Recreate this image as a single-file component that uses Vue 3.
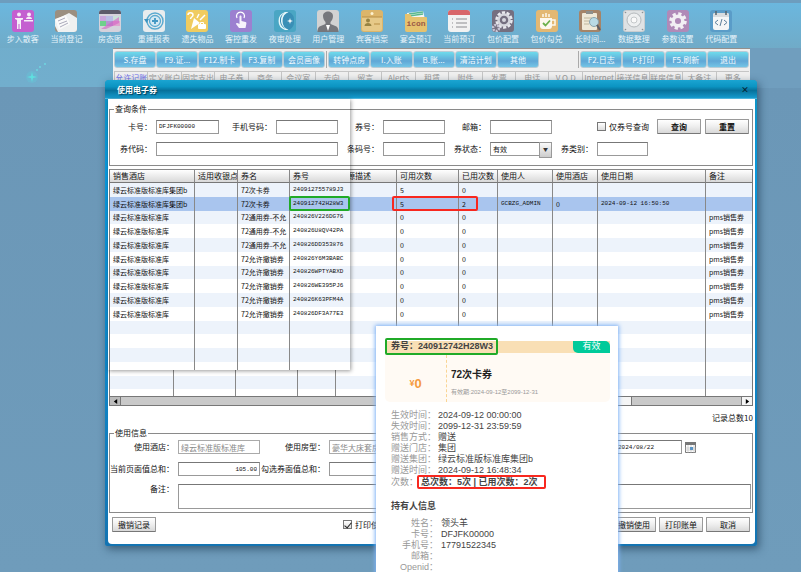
<template>
  <div class="page">
    <!-- 顶部工具栏 -->
    <nav class="toolbar">
      <a v-for="item in tools" :key="item.name" class="tool" href="#">
        <svg viewBox="0 0 22 22" aria-hidden="true" v-html="item.icon"></svg>
        <span>{{ item.name }}</span>
      </a>
    </nav>
    <svg class="sparkle" viewBox="0 0 40 24" aria-hidden="true">
      <circle cx="12" cy="15" r="6" fill="#64c9d9" opacity=".35" />
      <path d="M12 10l1 4 4 1-4 1-1 4-1-4-4-1 4-1z" fill="#5fe0e0" />
      <g fill="#6fd6e0">
        <circle cx="20" cy="5" r="1" /><circle cx="25" cy="2" r="1" /><circle cx="17" cy="8" r="1" />
      </g>
    </svg>

    <!-- 主界面 -->
    <main class="panel">
      <div class="actions">
        <div class="group five"><button v-for="a in actionsA" :key="a">{{ a }}</button></div>
        <i class="sep"></i>
        <div class="group five"><button v-for="a in actionsB" :key="a">{{ a }}</button></div>
        <i class="space"></i>
        <i class="sep"></i>
        <div class="group four"><button v-for="a in actionsC" :key="a">{{ a }}</button></div>
      </div>
      <div class="tabs">
        <a v-for="(t, i) in tabs" :key="t" href="#" :class="{ active: i === 0 }">{{ t }}</a>
      </div>
    </main>

    <!-- 使用电子券 弹窗 -->
    <section class="dialog">
      <header class="dialog-title">
        <h1>使用电子券</h1>
        <button class="close" aria-label="关闭">×</button>
      </header>
      <div class="dialog-body">
        <fieldset class="search">
          <legend>查询条件</legend>
          <div class="search-grid">
            <label for="cardNo">卡号：</label>
            <input id="cardNo" v-model="query.cardNo" class="mono" type="text">
            <label for="mobile">手机号码：</label>
            <input id="mobile" v-model="query.mobile" type="text">
            <label for="couponNo">券号：</label>
            <input id="couponNo" v-model="query.couponNo" type="text">
            <label for="email">邮箱：</label>
            <input id="email" v-model="query.email" type="text">
            <span></span>
            <label class="check" for="onlyNo"><input id="onlyNo" type="checkbox">仅券号查询</label>
            <div class="search-buttons">
              <button class="btn strong">查询</button>
              <button class="btn strong">重置</button>
            </div>

            <label for="code">券代码：</label>
            <input id="code" v-model="query.code" class="wide" type="text">
            <label for="barcode">条码号：</label>
            <input id="barcode" v-model="query.barcode" type="text">
            <label for="status">券状态：</label>
            <div class="select">
              <select id="status"><option>有效</option></select>
            </div>
            <label for="category">券类别：</label>
            <input id="category" v-model="query.category" type="text">
          </div>
        </fieldset>

        <div class="results">
          <table>
            <colgroup>
              <col v-for="(c, i) in baseCols" :key="i" :style="{ width: c.width }">
            </colgroup>
            <thead>
              <tr><th v-for="(c, i) in baseCols" :key="i">{{ c.title }}</th></tr>
            </thead>
            <tbody>
              <tr v-for="(r, i) in rows" :key="i" :class="{ selected: i === 1 }">
                <td v-for="(c, j) in baseCols" :key="j" :class="{ mono: c.mono }">{{ c.key ? r[c.key] : '' }}</td>
              </tr>
            </tbody>
          </table>
          <span class="mark-red count-mark"></span>
        </div>
        <div class="scrollbar">
          <button aria-label="向左滚动"><svg viewBox="0 0 6 6"><path d="M5 0v6L1 3z" /></svg></button>
          <div class="track"><i class="thumb"></i></div>
          <button class="light" aria-label="向右滚动"><svg viewBox="0 0 6 6"><path d="M1 0v6l4-3z" /></svg></button>
        </div>
        <p class="total">记录总数10</p>

        <fieldset class="usage">
          <legend>使用信息</legend>
          <div class="usage-grid">
            <label for="hotel">使用酒店：</label>
            <input id="hotel" class="readonly" type="text" value="绿云标准版标准库" readonly>
            <label for="room">使用房型：</label>
            <input id="room" class="readonly" type="text" value="豪华大床套房" readonly>
            <label for="date">使用日期：</label>
            <input id="date" class="mono" type="text" value="2024/08/22">
            <button class="calendar" aria-label="选择日期">
              <svg viewBox="0 0 11 11">
                <path d="M.5 1.5h10v9H.5z" fill="#fff" stroke="#777" />
                <path d="M0 0h11v3H0z" fill="#777" />
                <path d="M3 3v8M6 3v8M9 3v8M0 6h11M0 8h11" stroke="#bbb" stroke-width=".6" />
                <path d="M5 5h3v3H5z" fill="#5b94c4" />
              </svg>
            </button>

            <label for="pageSum">当前页面值总和：</label>
            <input id="pageSum" class="number mono" type="text" value="105.00">
            <label for="pickSum">勾选券面值总和：</label>
            <input id="pickSum" class="number" type="text">

            <label class="remark-label" for="remark">备注：</label>
            <textarea id="remark"></textarea>
          </div>
        </fieldset>

        <footer class="footer">
          <button class="btn">撤销记录</button>
          <label class="check" for="print"><input id="print" type="checkbox" checked>打印使用单</label>
          <i class="space"></i>
          <button class="btn">撤销使用</button>
          <button class="btn">打印账单</button>
          <button class="btn">取消</button>
        </footer>

        <!-- 横向滚动前的左侧列 -->
        <div class="inset">
          <div class="inset-clip">
            <table>
              <colgroup>
                <col v-for="c in insetCols" :key="c.key" :style="{ width: c.width }">
              </colgroup>
              <thead>
                <tr><th v-for="c in insetCols" :key="c.key">{{ c.title }}</th></tr>
              </thead>
              <tbody>
                <tr v-for="(r, i) in rows" :key="i" :class="{ selected: i === 1 }">
                  <td v-for="c in insetCols" :key="c.key" :class="{ mono: c.mono }">{{ r[c.key] }}</td>
                </tr>
              </tbody>
            </table>
          </div>
          <span class="mark-green no-mark"></span>
        </div>
      </div>
    </section>

    <!-- 券详情 -->
    <aside class="coupon">
      <div class="coupon-head">
        <strong class="mark-green">券号：240912742H28W3</strong>
        <span class="badge">有效</span>
      </div>
      <div class="coupon-body">
        <div class="price"><small>¥</small>0</div>
        <div class="desc">
          <h2>72次卡券</h2>
          <p>有效期:2024-09-12至2099-12-31</p>
        </div>
      </div>
      <dl class="info">
        <template v-for="d in details" :key="d[0]">
          <dt>{{ d[0] }}：</dt>
          <dd>{{ d[1] }}</dd>
        </template>
      </dl>
      <p class="times">次数：<strong class="mark-red">总次数：5次 | 已用次数：2次</strong></p>
      <h3>持有人信息</h3>
      <dl class="info holder">
        <template v-for="d in holder" :key="d[0]">
          <dt>{{ d[0] }}：</dt>
          <dd>{{ d[1] }}</dd>
        </template>
      </dl>
    </aside>
  </div>
</template>

<script setup>
import { reactive } from 'vue'

const box = (fill) => `<rect width="22" height="22" rx="3" fill="${fill}"/>`

const tools = [
  {
    name: '步入散客',
    icon: box('#c45fd0') + '<g fill="#f5eef8"><circle cx="7" cy="4.500" r="2"/><path d="M3 8h8v1.500L9 10v9H7.500v-5h-1v5H5v-9l-2-1z"/><circle cx="17" cy="4.500" r="2"/><path d="M14 9c0-3 6-3 6 0z"/><path d="M12 10h9v1.500h-9z"/></g>'
  },
  {
    name: '当前登记',
    icon: box('#9b8f80') + '<path d="M0 10L14 3l8 5v11a3 3 0 0 1-3 3H3l-3-6z" fill="#eef0f0"/><path d="M0 9l11-4 4 9-11 6z" fill="#fafafa"/><path d="M3 11l7-3M4 14l8-3M5 17l8-4" stroke="#aab" stroke-width="1" fill="none"/>'
  },
  {
    name: '房态图',
    icon: box('#d5d2dc') + '<path d="M1 6h6v5H1z" fill="#c9a6dd"/><path d="M7 6h7v5H7z" fill="#b9bde6"/><path d="M14 6h7v5h-7z" fill="#c9e0d8"/><path d="M1 11h6v5H1z" fill="#6fd08c"/><path d="M7 11h7v5H7z" fill="#b593d2"/><path d="M14 11h7v5h-7z" fill="#dfa3cf"/><path d="M2 19L20 7v6L7 19z" fill="#d35fc4" opacity=".6"/><path d="M0 4V3a3 3 0 0 1 3-3h16a3 3 0 0 1 3 3v1z" fill="#5c5b6b"/>'
  },
  {
    name: '重建报表',
    icon: box('#e8ecee') + '<circle cx="12" cy="11" r="8" fill="none" stroke="#5aaad0" stroke-width="1.500"/><circle cx="12" cy="11" r="5.500" fill="#d4e9f3" stroke="#5aaad0" stroke-width="1.300"/><path d="M12 8v6M9 11h6" stroke="#4198c4" stroke-width="1.800"/><path d="M1 9l5 0-2.500 4z" fill="#3d93bf"/>'
  },
  {
    name: '遗失物品',
    icon: box('#f0cc60') + '<path d="M5 19L8 8l6 5z" fill="#fff"/><path d="M2 5c0-3 5-3 5 0 0 2-2.500 2-2.500 4M13 4l-2 4M19 5l-5 5" stroke="#fff" stroke-width="1.500" fill="none"/><rect x="12" y="14" width="8" height="5" rx="1" fill="#fff"/><path d="M14.500 14v-1.500h3V14" stroke="#fff" fill="none"/>'
  },
  {
    name: '客控重发',
    icon: box('#9c80d0') + '<path d="M7 8a4 4 0 1 1 7 0" stroke="#fff" stroke-width="1.300" fill="none"/><path d="M9.500 6.500c0-1.500 2-1.500 2 0V11l4 1c1 .3 1 1 .8 2l-.8 4H9l-3-4c0-1 1-1.500 3.500 0z" fill="#f6f2fc"/>'
  },
  {
    name: '夜审处理',
    icon: box('#4aa6c4') + '<path d="M11 2a9.500 9.500 0 0 0 0 18h4a10 10 0 0 1 0-18z" fill="#e4f6fa"/><path d="M10 3a9 9 0 0 0 2 16 10 10 0 0 1-2-16z" fill="#2f86ae"/><path d="M15 2a9.500 9.500 0 0 0 0 18 9 9 0 0 0 5-9 9 9 0 0 0-5-9z" fill="#3a8fb6"/><path d="M16 8l.7 2.300L19 11l-2.300.7L16 14l-.7-2.300L13 11l2.300-.7z" fill="#fff"/>'
  },
  {
    name: '用户管理',
    icon: box('#d2d2d2') + '<path d="M6 6c0-6 10-6 10 0 0 3-1.500 5-2.500 6v2l6 2.500c1.500 1 2 3 2 5.500h-21c0-2.500.5-4.500 2-5.500l6-2.500v-2C7.500 11 6 9 6 6z" fill="#76777c"/><path d="M9 15l2 6 2-6z" fill="#fff"/>'
  },
  {
    name: '宾客档案',
    icon: box('#dcb56a') + '<path d="M1 7h20v12a2 2 0 0 1-2 2H3a2 2 0 0 1-2-2z" fill="#e6c988"/><path d="M1 7h20" stroke="#b98f45"/><circle cx="11" cy="3.500" r="1.500" fill="#fff3d0"/><circle cx="7" cy="10.500" r="2" fill="#988342"/><path d="M3.500 16c0-4 7-4 7 0z" fill="#988342"/><path d="M13 14h6" stroke="#b98f45"/>'
  },
  {
    name: '宴会预订',
    icon: '<path d="M2 3l16-2 2 8H2z" fill="#f3f6f4"/><path d="M4 4l14-2M4 6l14-2" stroke="#58b98e" stroke-width="1.500"/><path d="M0 4h5l2 3h14a1 1 0 0 1 1 1v12a2 2 0 0 1-2 2H2a2 2 0 0 1-2-2z" fill="#e6c26e"/><text x="11" y="16" text-anchor="middle" font-family="Liberation Mono, monospace" font-weight="bold" font-size="8" fill="#9b5a46">icon</text>'
  },
  {
    name: '当前预订',
    icon: box('#f2f2f2') + '<path d="M0 5V3a3 3 0 0 1 3-3h16a3 3 0 0 1 3 3v2z" fill="#d8666a"/><path d="M4 9h1M8 9h11M4 13h1M8 13h11M4 17h1M8 17h11" stroke="#8b8b90" stroke-width="1.200"/>'
  },
  {
    name: '包价配置',
    icon: box('#756f80') + '<circle cx="12" cy="10" r="7" fill="none" stroke="#e9e9ee" stroke-width="3.500" stroke-dasharray="3 1.400"/><circle cx="12" cy="10" r="5.500" fill="none" stroke="#d6d6dd" stroke-width="2.500"/><circle cx="12" cy="10" r="2" fill="#d6d6dd"/><circle cx="4" cy="18" r="3" fill="none" stroke="#c9c5d6" stroke-width="2.500" stroke-dasharray="2 1"/>'
  },
  {
    name: '包价勾兑',
    icon: box('#e3b873') + '<path d="M4 8h12v8a3 3 0 0 1-3 3H7a3 3 0 0 1-3-3z" fill="#fdf8ee"/><path d="M16 10h3v5h-3M7 7V4M10 7V3M13 7V4" stroke="#fdf8ee" stroke-width="1.500" fill="none"/><path d="M7 13l2.500 2.500 4.500-5" stroke="#6bb04b" stroke-width="1.800" fill="none"/>'
  },
  {
    name: '长时间...',
    icon: box('#a58468') + '<rect x="3" y="3" width="15" height="17" rx="1" fill="#efe9d8"/><path d="M7 1h7v3H7z" fill="#8d8f8c"/><path d="M5 8h8M5 11h5M5 14h5" stroke="#bfb69c"/><circle cx="15" cy="12" r="4.500" fill="#b9dbe6" stroke="#8aa4ad"/><path d="M18 15l3 5" stroke="#5d5f66" stroke-width="2"/>'
  },
  {
    name: '数据整理',
    icon: box('#c9cdd0') + '<rect x="1" y="1" width="20" height="20" rx="2" fill="#dfe2e4"/><circle cx="11" cy="10" r="7" fill="#eef0f1" stroke="#b4b9bc"/><circle cx="11" cy="10" r="3" fill="#fafafa" stroke="#c4c8ca"/><g fill="#8c9296"><circle cx="2.500" cy="2.500" r=".8"/><circle cx="19.500" cy="2.500" r=".8"/><circle cx="2.500" cy="19.500" r=".8"/><circle cx="19.500" cy="19.500" r=".8"/></g>'
  },
  {
    name: '参数设置',
    icon: box('#b08ab8') + '<circle cx="11" cy="11" r="7" fill="none" stroke="#f2eff4" stroke-width="3.500" stroke-dasharray="3.100 2.400"/><circle cx="11" cy="11" r="4.800" fill="none" stroke="#f2eff4" stroke-width="3.500"/>'
  },
  {
    name: '代码配置',
    icon: box('#5a9cc8') + '<rect x="3" y="3" width="16" height="17" rx="2" fill="#f5f6f7"/><path d="M3 7V5a2 2 0 0 1 2-2h12a2 2 0 0 1 2 2v2z" fill="#d9dcdf"/><path d="M6 1v4M16 1v4" stroke="#56636e" stroke-width="1.500"/><path d="M8 10l-3 2.500L8 15M14 10l3 2.500-3 2.500M12 9l-2 7" stroke="#5d7f9c" fill="none"/>'
  }
]

const actionsA = ['S.存盘', 'F9.证...', 'F12.制卡', 'F3.复制', '会员画像']
const actionsB = ['转钟点房', 'I.入账', 'B.账...', '清洁计划', '其他']
const actionsC = ['F2.日志', 'P.打印', 'F5.刷新', '退出']

const tabs = [
  '允许记账', '定义账户', '固定支出', '电子券', '商务', '会议室', '去向', '留言', 'Alerts', '租赁',
  '附件', '发票', '电话', 'V.O.D', 'Internet', '接送信息', '联房信息', '大备注', '更多'
]

const query = reactive({
  cardNo: 'DFJFK00000',
  mobile: '',
  couponNo: '',
  email: '',
  code: '',
  barcode: '',
  category: ''
})

const baseCols = [
  { title: '', width: '64px' },
  { title: '', width: '62px' },
  { title: '', width: '62px' },
  { title: '', width: '38px' },
  { title: '来源描述', width: '61px' },
  { title: '可用次数', width: '62px', key: 'total' },
  { title: '已用次数', width: '39px', key: 'used' },
  { title: '使用人', width: '55px', key: 'user', mono: true },
  { title: '使用酒店', width: '45px', key: 'useHotel' },
  { title: '使用日期', width: '108px', key: 'date', mono: true },
  { title: '备注', width: '48px', key: 'note' }
]

const insetCols = [
  { title: '销售酒店', width: '85px', key: 'hotel' },
  { title: '适用收银点', width: '43px', key: 'pos' },
  { title: '券名', width: '52px', key: 'name' },
  { title: '券号', width: '60px', key: 'no', mono: true }
]

const lib = '绿云标准版标准库'
const old = (name, no) => ({ hotel: lib, name, no, total: 0, used: 0, note: 'pms销售券' })

const rows = [
  { hotel: lib + '集团b', name: '72次卡券', no: '240912755789J3', total: 5, used: 0 },
  {
    hotel: lib + '集团b', name: '72次卡券', no: '240912742H28W3', total: 5, used: 2,
    user: 'GCBZG_ADMIN', useHotel: 0, date: '2024-09-12 16:50:50'
  },
  old('72通用券-不允', '240826V226DG76'),
  old('72通用券-不允', '240826U8QV42PA'),
  old('72通用券-不允', '240826DD353876'),
  old('72允许撤销券', '240826Y6M3BABC'),
  old('72允许撤销券', '240826WPTYABXD'),
  old('72允许撤销券', '240826WE395PJ6'),
  old('72允许撤销券', '240826K63PFM4A'),
  old('72允许撤销券', '240826DF3A77E3'),
  {}, {}, {}, {}, {}, {}
]

const details = [
  ['生效时间', '2024-09-12 00:00:00'],
  ['失效时间', '2099-12-31 23:59:59'],
  ['销售方式', '赠送'],
  ['赠送门店', '集团'],
  ['赠送集团', '绿云标准版标准库集团b'],
  ['赠送时间', '2024-09-12 16:48:34']
]

const holder = [
  ['姓名', '领头羊'],
  ['卡号', 'DFJFK00000'],
  ['手机号', '17791522345'],
  ['邮箱', ''],
  ['Openid', '']
]
</script>

<style>
body {
  margin: 0;
}
</style>

<style scoped>
.page {
  position: relative;
  height: 100vh;
  overflow: hidden;
  background: linear-gradient(#6fadcb 0, #72aecd 87px, #6b97b7 87px, #6f9cbb 100%);
  font-family: "Noto Sans CJK SC", "Liberation Sans", sans-serif;
  font-size: 8px;
  line-height: 10px;
  color: #111;
}

.page * {
  box-sizing: border-box;
}

button, input, select, textarea {
  font: inherit;
  color: inherit;
  margin: 0;
  padding: 0;
  border-radius: 0;
}

h1, h2, h3, p, dl, dd {
  margin: 0;
}

a {
  color: inherit;
  text-decoration: none;
}

/* 工具栏 */
.toolbar {
  display: grid;
  grid-template-columns: repeat(17, 1fr);
  padding: 7px 58px 4px 1px;
  border-top: 3px solid #6d9dbe;
  background: linear-gradient(#6bb7de, #70abc8);
}

.tool {
  display: flex;
  flex-direction: column;
  align-items: center;
  gap: 2px;
  color: #e6f3fa;
  white-space: nowrap;
}

.tool svg {
  width: 22px;
  height: 22px;
}

.sparkle {
  position: absolute;
  left: 20px;
  top: 62px;
  width: 40px;
  height: 24px;
}

/* 主界面 */
.panel {
  margin: 0 51px 0 113px;
  padding: 2px 1px 0;
  background: #efefef;
  border-top: 1px solid #948f8c;
  box-shadow: 400px 0 0 #709ebe;
}

.actions {
  display: flex;
  height: 17px;
}

.group {
  display: flex;
  min-width: 0;
}

.five {
  flex: 5 1 0;
}

.four {
  flex: 4 1 0;
}

.group button {
  flex: 1 1 0;
  min-width: 0;
  overflow: hidden;
  white-space: nowrap;
  border: 1px solid #b8ccd6;
  border-radius: 3px;
  background: linear-gradient(#6ddbec, #60a7d6 60%, #74c5e6);
  color: #f2fbff;
}

.sep {
  width: 1px;
  margin: 0 1px;
  background: #aaa;
}

.actions .space {
  width: 38px;
}

.tabs {
  display: flex;
  margin-top: 3px;
  height: 17px;
}

.tabs a {
  flex: 1 1 0;
  min-width: 0;
  padding-top: 1px;
  overflow: hidden;
  text-align: center;
  white-space: nowrap;
  color: #999;
  border-top: 1px solid #c5c5c5;
  border-left: 1px solid #c5c5c5;
}

.tabs .active {
  color: #6a6ae8;
}

/* 弹窗 */
.dialog {
  position: absolute;
  left: 105px;
  right: 44px;
  top: 80px;
  padding: 0 2px 2px 3px;
  border-radius: 4px 4px 2px 2px;
  background: linear-gradient(#0f93c2, #0a98dc 20%, #1474b2);
  box-shadow: 2px 3px 8px rgba(20, 50, 75, .6);
}

.dialog-title {
  display: flex;
  align-items: center;
  justify-content: space-between;
  height: 19px;
  margin: 0 -2px 0 -3px;
  padding: 0 8px 0 12px;
  border-radius: 4px 4px 0 0;
  background: linear-gradient(#1ba5d2, #0b94c2 35%, #07719b 55%, #1498ca 92%, #6cc3e6);
}

.dialog-title h1 {
  font-size: 8px;
  font-weight: bold;
  color: #fff;
  text-shadow: 1px 1px 1px #033b54;
}

.close {
  border: 0;
  background: none;
  font-weight: bold;
  font-size: 8px;
  color: #04202c;
}

.dialog-body {
  position: relative;
  padding: 5px 2px 12px 1px;
  background: #fff;
  border-radius: 0 0 4px 4px;
}

fieldset {
  min-width: 0;
  margin: 0;
  padding: 0;
  border: 1px solid #8a8a8a;
}

legend {
  margin-left: 4px;
  padding: 0 1px;
}

label {
  text-align: right;
  white-space: nowrap;
}

input[type="text"], textarea, select {
  width: 100%;
  min-width: 0;
  height: 14px;
  padding: 0 2px;
  border: 1px solid #999;
  border-top-color: #777;
  background: #fff;
  font-size: 7px;
  outline: none;
}

.search-grid {
  display: grid;
  grid-template-columns:
    46px minmax(0, 63fr) 57px minmax(0, 62fr) 45px minmax(0, 62fr)
    45px minmax(0, 62fr) 45px minmax(0, 51fr) 104px;
  grid-auto-rows: 15px;
  row-gap: 7px;
  align-items: center;
  padding: 5px 0 9px;
}

.search-grid > label:not(.check) {
  padding-right: 4px;
}

.wide {
  grid-column: span 3;
}

.check {
  display: flex;
  align-items: center;
  gap: 3px;
}

.check input {
  appearance: none;
  flex: none;
  width: 9px;
  height: 9px;
  border: 1px solid #777;
  background: linear-gradient(#fff, #ddd);
}

.check input:checked::after {
  content: '';
  display: block;
  width: 3px;
  height: 6px;
  margin: 0 0 0 2px;
  border: solid #222;
  border-width: 0 1px 1px 0;
  transform: rotate(40deg);
}

.search-buttons {
  display: flex;
  gap: 4px;
  padding: 0 4px 0 9px;
}

.btn {
  flex: 0 0 44px;
  height: 15px;
  border: 1px solid #999;
  border-bottom-color: #777;
  border-radius: 1px;
  background: linear-gradient(#fff, #eee 50%, #d8d8d8);
  white-space: nowrap;
}

.strong {
  font-weight: bold;
}

.select {
  position: relative;
}

.select select {
  display: block;
  appearance: none;
  padding: 0 12px 0 2px;
}

.select::after {
  content: '▼';
  position: absolute;
  top: 0;
  right: 0;
  width: 11px;
  height: 14px;
  border: 1px solid #999;
  background: linear-gradient(#fafafa, #ccc);
  font-size: 5px;
  line-height: 12px;
  text-align: center;
  color: #333;
  pointer-events: none;
}

/* 表格 */
.results {
  position: relative;
  height: 227px;
  margin-top: 3px;
  overflow: hidden;
  border: solid #777;
  border-width: 0 1px;
}

table {
  width: 100%;
  height: 234px;
  table-layout: fixed;
  border-collapse: separate;
  border-spacing: 0;
}

th, td {
  padding: 0 3px;
  overflow: hidden;
  white-space: nowrap;
  text-align: left;
  border-right: 1px solid #888;
}

th {
  height: 14px;
  font-size: 8px;
  font-weight: normal;
  border-top: 1px solid #888;
  border-bottom: 1px solid #777;
  background: linear-gradient(#fff, #d9d9d9);
}

tbody tr {
  height: 12px;
}

td {
  font-size: 7px;
}

td.mono, input.mono[type="text"] {
  font-family: "Liberation Mono", "Noto Sans CJK SC", monospace;
  font-size: 6px;
}

th:last-child, td:last-child {
  border-right: 0;
}

tbody tr:nth-child(odd) {
  background: #edf3fb;
}

tbody tr.selected {
  background: #a9c5ee;
}

.mark-red {
  border: 2px solid #f8281f;
  border-radius: 2px;
}

.mark-green {
  border: 2px solid #20aa28;
  border-radius: 2px;
}

.count-mark {
  position: absolute;
  left: 282px;
  top: 27px;
  width: 86px;
  height: 15px;
}

.inset {
  position: absolute;
  left: 0;
  top: 0;
  width: 242px;
  padding: 70px 0 0 1px;
  box-shadow: 1px 1px 4px rgba(0, 0, 0, .4);
}

.inset-clip {
  height: 201px;
  overflow: hidden;
  border-left: 1px solid #777;
  background: #fff;
}

.no-mark {
  position: absolute;
  left: 181px;
  top: 97px;
  width: 61px;
  height: 15px;
}

.scrollbar {
  display: flex;
  height: 10px;
  border: 1px solid #777;
  background: #c9c9c9;
}

.scrollbar button {
  display: flex;
  align-items: center;
  justify-content: center;
  width: 11px;
  border: 0;
  border-right: 1px solid #777;
  background: #bbb;
}

.scrollbar .light {
  border-right: 0;
  border-left: 1px solid #777;
  background: #f5f5f5;
}

.scrollbar svg {
  width: 5px;
  height: 5px;
}

.track {
  display: flex;
  flex: 1;
  justify-content: flex-end;
  padding-right: 17%;
}

.thumb {
  width: 38%;
  border-right: 1px solid #777;
  background: #f5f5f5;
}

.total {
  padding: 6px 0 5px;
  line-height: 11px;
  text-align: right;
}

/* 使用信息 */
.usage-grid {
  display: grid;
  grid-template-columns: 68px 82px 69px 82px minmax(0, 1fr) 67px 69px;
  row-gap: 8px;
  align-items: center;
  padding: 2px 1px 3px 0;
}

.usage-grid label {
  padding-right: 4px;
}

input.readonly {
  color: #888;
  border-color: #aaa;
  font-size: 8px;
}

input.number {
  text-align: right;
}

.calendar {
  width: 11px;
  height: 11px;
  margin-left: 3px;
  border: 0;
  background: none;
}

.calendar svg {
  display: block;
}

.remark-label {
  grid-column: 1;
  align-self: start;
}

textarea {
  grid-column: 2 / -1;
  display: block;
  height: 25px;
  resize: none;
}

.footer {
  display: flex;
  align-items: center;
  gap: 3px;
  padding: 4px 3px 0;
}

.footer .check {
  margin-left: 184px;
}

.footer .space {
  flex: 1;
}

/* 券详情 */
.coupon {
  position: absolute;
  left: 376px;
  top: 326px;
  width: 242px;
  padding: 12px 8px 10px 9px;
  background: #fff;
  box-shadow: 0 0 4px 1px #7fb2f5;
  font-family: "Liberation Sans", "Noto Sans CJK SC", sans-serif;
  font-size: 9px;
  line-height: 11px;
  color: #444;
}

.coupon-head {
  display: flex;
  align-items: center;
  justify-content: space-between;
  background: linear-gradient(#fff 3px, #f9dfb5 3px, #f9dfb5 15px, #fffaf4 15px);
}

.coupon-head strong {
  padding: 1px 3px 1px 4px;
  white-space: nowrap;
}

.badge {
  width: 37px;
  height: 12px;
  border-radius: 0 5px 0 5px;
  background: #00ca9a;
  color: #fff;
  text-align: center;
}

.coupon-body {
  display: flex;
  height: 47px;
  border-radius: 0 0 5px 5px;
  background: #fffaf4;
}

.price {
  display: flex;
  align-items: center;
  justify-content: center;
  width: 62px;
  padding-top: 10px;
  border-right: 1px dashed #fad595;
  font-size: 13px;
  font-weight: bold;
  color: #f59a3e;
}

.price small {
  font-size: 9px;
}

.desc {
  padding: 14px 0 0 4px;
}

.desc h2 {
  font-size: 10px;
  line-height: 12px;
  color: #222;
}

.desc p {
  margin-top: 7px;
  font-size: 6px;
  line-height: 8px;
  color: #999;
  white-space: nowrap;
}

.info {
  display: grid;
  grid-template-columns: 47px 1fr;
  grid-auto-rows: 11px;
  margin: 8px 0 0 6px;
  white-space: nowrap;
}

.info dt {
  color: #999;
}

.times {
  margin: 1px 0 0 6px;
  color: #999;
  white-space: nowrap;
}

.times strong {
  margin-left: -1px;
  padding: 0 6px 0 2px;
  color: #444;
}

.coupon h3 {
  margin: 13px 0 0 6px;
  font-size: 9px;
}

.holder {
  column-gap: 3px;
  margin-top: 6px;
}

.holder dt {
  text-align: right;
}
</style>
